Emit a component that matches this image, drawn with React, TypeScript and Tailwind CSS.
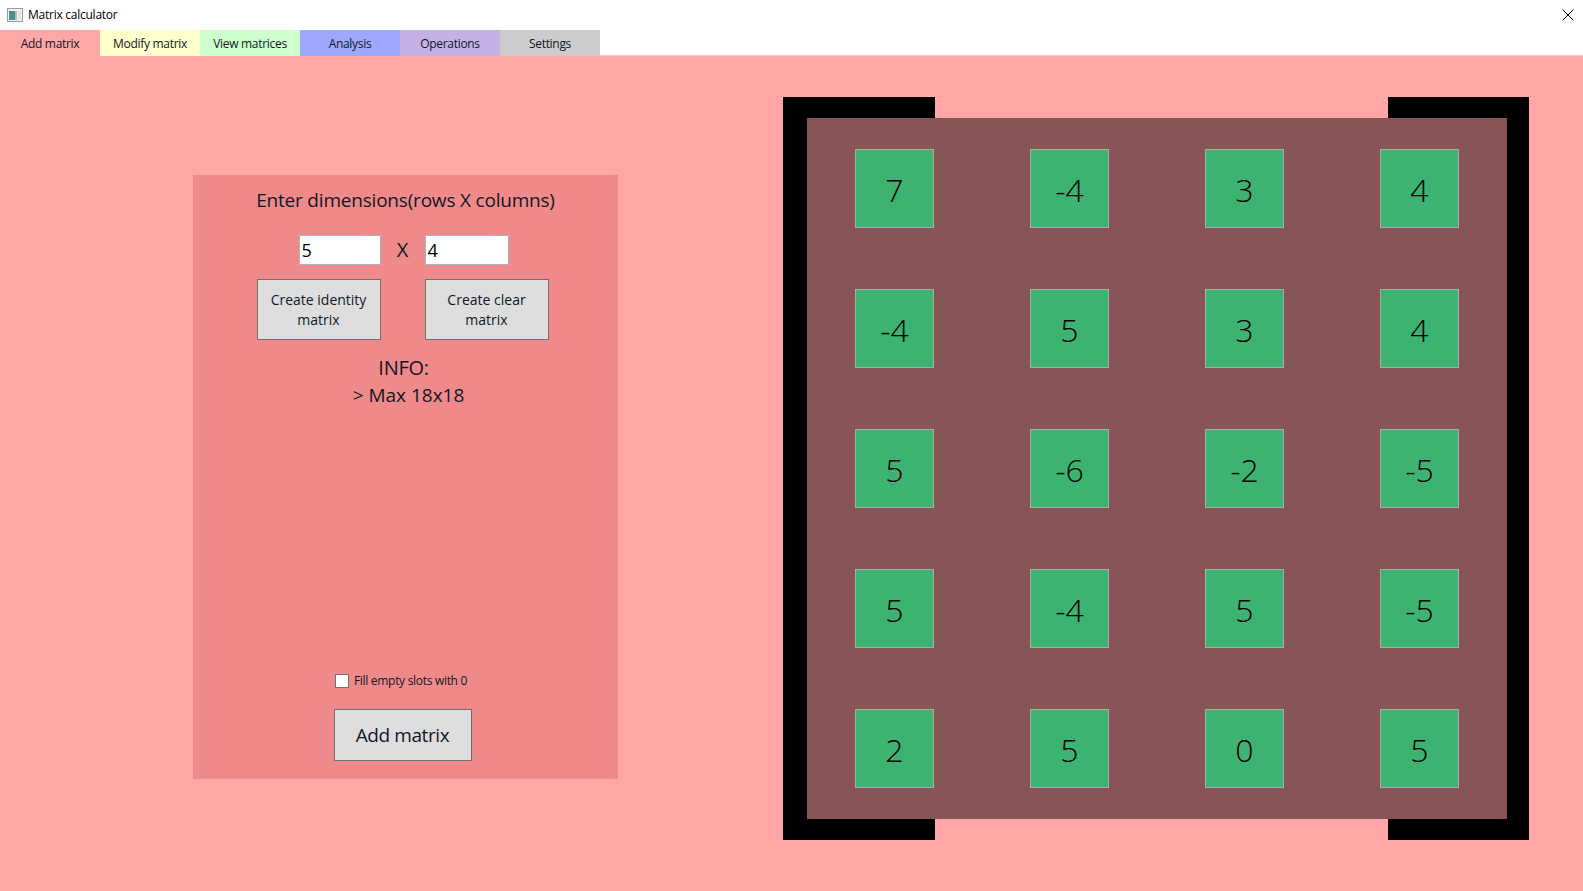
import { X } from 'lucide-react';

const font = "font-['Open_Sans',sans-serif]";

const tabs = [
  { label: 'Add matrix', color: 'bg-[#ffa6a6]' },
  { label: 'Modify matrix', color: 'bg-[#ffffcc]' },
  { label: 'View matrices', color: 'bg-[#ccffcc]' },
  { label: 'Analysis', color: 'bg-[#9fa8ff]' },
  { label: 'Operations', color: 'bg-[#c5b0e6]' },
  { label: 'Settings', color: 'bg-[#cccccc]' },
];

const matrix = [
  [7, -4, 3, 4],
  [-4, 5, 3, 4],
  [5, -6, -2, -5],
  [5, -4, 5, -5],
  [2, 5, 0, 5],
];

function WindowIcon() {
  return (
    <svg width="16" height="14" viewBox="0 0 16 14" className="shrink-0">
      <rect x="0.5" y="0.5" width="15" height="13" fill="#f4f4f4" stroke="#9a9a9a" />
      <rect x="2" y="3" width="6" height="9" fill="#4f8f88" />
      <rect x="8" y="3" width="2" height="9" fill="#a9bccb" />
      <rect x="11" y="3" width="3" height="9" fill="#dfe4e8" />
    </svg>
  );
}

function MatrixPanel() {
  return (
    <div className="relative ml-[165px] mt-[41px] h-[743px] w-[746px] pl-6 pt-[21px]">
      {/* brackets */}
      <div className="absolute inset-y-0 left-0 w-[152px] border-b-[22px] border-l-[24px] border-t-[21px] border-black" />
      <div className="absolute inset-y-0 right-0 w-[141px] border-b-[22px] border-r-[22px] border-t-[21px] border-black" />
      <div className="relative grid h-[701px] w-[700px] grid-cols-4 grid-rows-5 bg-[#875555]">
        {matrix.flat().map((value, i) => (
          <div key={i} className="flex items-center justify-center">
            <div className="flex h-[79px] w-[79px] items-center justify-center border border-[#aaaaaa] bg-[#3cb371] pt-[3px] text-[32px] font-light text-black">
              {value}
            </div>
          </div>
        ))}
      </div>
    </div>
  );
}

function AddForm() {
  return (
    <div className="ml-[193px] mt-[119px] flex h-[604px] w-[425px] flex-col items-center bg-[#f08a8a] pr-[6px] text-[#111827]">
      <div className="ml-[6px] mt-[10px] text-[19px] leading-[30px] tracking-[-0.2px]">
        Enter dimensions(rows X columns)
      </div>

      <div className="ml-[2px] mt-5 flex h-[30px] items-center">
        <input
          readOnly
          defaultValue="5"
          className="h-[30px] w-[82px] border border-[#aab4bb] bg-white px-[2px] text-[18px] text-black outline-none"
        />
        <div className="w-11 text-center text-[20px]">X</div>
        <input
          readOnly
          defaultValue="4"
          className="h-[30px] w-[84px] border border-[#aab4bb] bg-white px-[2px] text-[18px] text-black outline-none"
        />
      </div>

      <div className="mt-[14px] flex gap-11">
        <button className="h-[61px] w-[124px] border border-[#707070] bg-[#dddddd] text-[14px] leading-5">
          Create identity
          <br />
          matrix
        </button>
        <button className="h-[61px] w-[124px] border border-[#707070] bg-[#dddddd] text-[14px] leading-5">
          Create clear
          <br />
          matrix
        </button>
      </div>

      <div className="ml-[2px] mt-[14px] text-[20px] leading-[27px] tracking-[-0.3px]">INFO:</div>
      <div className="ml-[12px] translate-y-px text-[19px] leading-[27px]">&gt; Max 18x18</div>

      <label className="-ml-[3px] mt-auto flex translate-y-px items-center gap-[5px] text-[12px] tracking-[-0.3px]">
        <input type="checkbox" className="h-[14px] w-[14px] appearance-none border border-[#707070] bg-white" />
        Fill empty slots with 0
      </label>

      <button className="mb-[18px] mt-[20px] h-[52px] w-[138px] border border-[#707070] bg-[#dddddd] text-[19px] tracking-[-0.4px]">
        Add matrix
      </button>
    </div>
  );
}

export default function App() {
  return (
    <div className={`flex h-[891px] w-[1583px] flex-col overflow-hidden bg-white ${font}`}>
      <div className="flex h-[30px] items-center pl-[7px] pr-[5px] text-[12px] tracking-[-0.25px] text-black">
        <WindowIcon />
        <span className="ml-[5px]">Matrix calculator</span>
        <X className="ml-auto h-5 w-5" strokeWidth={1.2} />
      </div>

      <div className="flex h-[26px] border-b border-[#d8d8d8]">
        {tabs.map((tab) => (
          <div
            key={tab.label}
            className={`flex h-[26px] w-[100px] items-center justify-center pt-[2px] text-[12px] tracking-[-0.3px] text-[#111827] ${tab.color}`}
          >
            {tab.label}
          </div>
        ))}
      </div>

      <div className="flex flex-1 bg-[#ffa6a6]">
        <AddForm />
        <MatrixPanel />
      </div>
    </div>
  );
}
